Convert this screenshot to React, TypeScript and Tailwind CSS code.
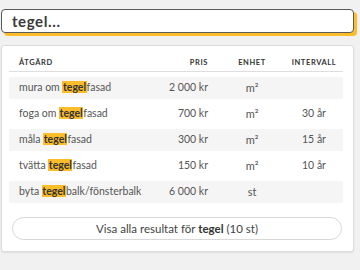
import React from "react";

const rows = [
  { pre: "mura om ", post: "fasad", price: "2 000 kr", unit: "m²", interval: "" },
  { pre: "foga om ", post: "fasad", price: "700 kr", unit: "m²", interval: "30 år" },
  { pre: "måla ", post: "fasad", price: "300 kr", unit: "m²", interval: "15 år" },
  { pre: "tvätta ", post: "fasad", price: "150 kr", unit: "m²", interval: "10 år" },
  { pre: "byta ", post: "balk/fönsterbalk", price: "6 000 kr", unit: "st", interval: "" },
];

export default function App() {
  return (
    <div className="w-[360px] h-[270px] bg-[#f1f1f1] overflow-hidden font-['Lato',sans-serif] text-[#555]">
      <div className="pt-[9px] pl-[1px] pr-[6px]">
        <div className="h-[24px] border border-[#5a5a5a] rounded-[4px] bg-white shadow-[3px_3px_0_#fcbd2b] pl-[10px] flex items-center text-[15px] font-bold tracking-[0.6px] text-[#3a3a3a]">
          tegel...
        </div>
        <div className="mt-[12px] border border-[#dcdcdc] rounded-[3px] bg-white pl-[7px] pr-[10px] pt-[9px] pb-[11px] shadow-[0_1px_2px_rgba(0,0,0,0.08)]">
          <div className="grid grid-cols-[1fr_70px_66px_58px] h-[17px] items-center border-b border-[#dedede] text-[7.5px] font-bold tracking-[0.6px] text-[#333] pb-[1px]">
            <div className="pl-[10px]">ÅTGÄRD</div>
            <div className="text-right pr-[11px]">PRIS</div>
            <div className="text-center">ENHET</div>
            <div className="text-center">INTERVALL</div>
          </div>
          <div className="mt-[5px] flex flex-col gap-[4px]">
            {rows.map((r, i) => (
              <div
                key={i}
                className={`grid grid-cols-[1fr_70px_66px_58px] h-[22px] items-center text-[10.5px] rounded-[2px] ${
                  i % 2 === 0 ? "bg-[#f5f5f5]" : "bg-white"
                }`}
              >
                <div className="pl-[10px] whitespace-nowrap">
                  {r.pre}
                  <span className="bg-[#fcbd2b] font-bold text-[#333] px-[0.5px]">tegel</span>
                  {r.post}
                </div>
                <div className="text-right pr-[11px] whitespace-nowrap">{r.price}</div>
                <div className="text-center text-[11px]">{r.unit}</div>
                <div className="text-center">{r.interval}</div>
              </div>
            ))}
          </div>
          <div className="mt-[14px] ml-[3px] mr-[1px] h-[23px] border border-[#d8d8d8] rounded-full flex items-center justify-center text-[11.5px] text-[#444]">
            Visa alla resultat för&nbsp;<span className="font-bold text-[#333]">tegel</span>&nbsp;(10 st)
          </div>
        </div>
      </div>
    </div>
  );
}
